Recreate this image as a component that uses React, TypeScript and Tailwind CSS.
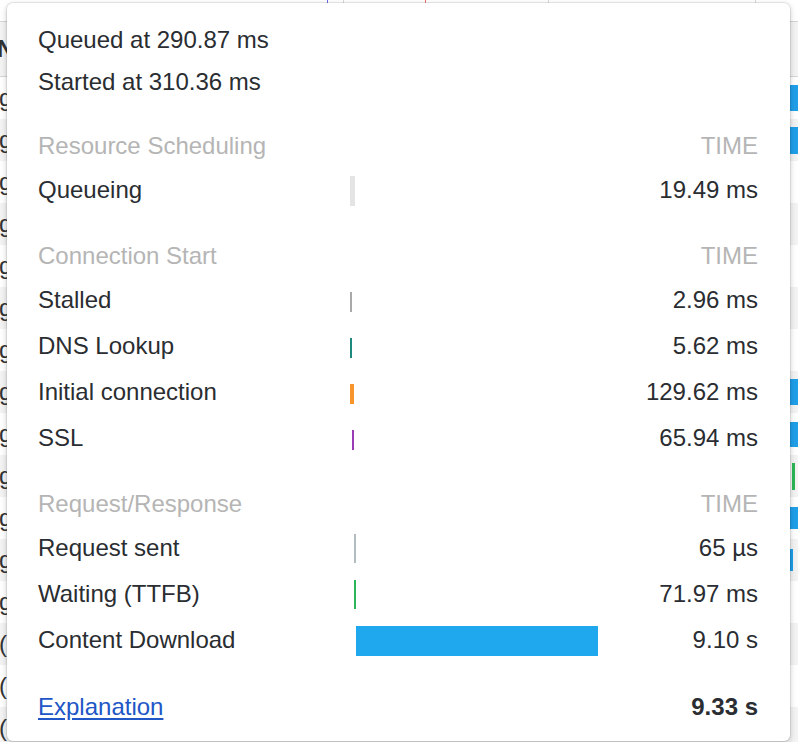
import React from "react"

const rows = Array.from({ length: 16 }, (_, i) => i)

// right-edge waterfall slivers peeking out past the popover
const sideBars: Record<number, string> = {
  0: "w-[8px] h-[26px] bg-[#1f9fe8]",
  1: "w-[8px] h-[27px] bg-[#1f9fe8]",
  7: "w-[8px] h-[26px] bg-[#1f9fe8]",
  8: "w-[8px] h-[25px] bg-[#1f9fe8]",
  9: "w-[3px] h-[27px] bg-[#2cb557] ml-[2px]",
  10: "w-[8px] h-[22px] bg-[#1f9fe8]",
  11: "w-[3px] h-[22px] bg-[#1f9fe8]",
}

type Row = { label: string; value: string; bar: string }

const sections: { title: string; rows: Row[] }[] = [
  {
    title: "Resource Scheduling",
    rows: [{ label: "Queueing", value: "19.49 ms", bar: "w-[5px] h-[30px] bg-[#e4e4e4] mt-[2px]" }],
  },
  {
    title: "Connection Start",
    rows: [
      { label: "Stalled", value: "2.96 ms", bar: "w-[2px] h-[20px] bg-[#a9a9a9] mt-[4px]" },
      { label: "DNS Lookup", value: "5.62 ms", bar: "w-[2px] h-[20px] bg-[#1e8a7e] mt-[4px]" },
      { label: "Initial connection", value: "129.62 ms", bar: "w-[4px] h-[20px] bg-[#f7952c] mt-[4px]" },
      { label: "SSL", value: "65.94 ms", bar: "ml-[2px] w-[2px] h-[20px] bg-[#9a3cb4] mt-[4px]" },
    ],
  },
  {
    title: "Request/Response",
    rows: [
      { label: "Request sent", value: "65 µs", bar: "ml-[4px] w-[2px] h-[29px] bg-[#b3bcc1]" },
      { label: "Waiting (TTFB)", value: "71.97 ms", bar: "ml-[4px] w-[2px] h-[29px] bg-[#2cb557]" },
      { label: "Content Download", value: "9.10 s", bar: "ml-[6px] w-[242px] h-[30px] bg-[#1fa8ee] mt-[1px]" },
    ],
  },
]

export default function App() {
  return (
    <div className="relative h-[742px] w-full overflow-hidden bg-white font-['Liberation_Sans',Arial,sans-serif] text-[24px] text-[#2a2d31]">
      {/* Network panel behind */}
      <div className="flex flex-col">
        <div className="relative h-[22px] border-b border-[#d6d6d6]">
          <div className="absolute left-[327px] top-0 h-full w-px bg-[#6b6bf0]" />
          <div className="absolute left-[343px] top-0 h-full w-px bg-[#dadada]" />
          <div className="absolute left-[425px] top-0 h-full w-px bg-[#f07070]" />
          <div className="absolute left-[548px] top-0 h-full w-px bg-[#dadada]" />
          <div className="absolute left-[755px] top-0 h-full w-px bg-[#dadada]" />
        </div>
        <div className="flex h-[55px] items-center border-b border-[#d6d6d6] bg-[#f3f3f3]">
          <span className="-ml-[3px] font-bold text-[#333]">N</span>
        </div>
        {rows.map((i) => (
          <div key={i} className={`flex h-[42px] items-center justify-between ${i % 2 ? "bg-[#f3f3f3]" : "bg-white"}`}>
            <span className={`-ml-[1px] text-[#333] ${i < 13 ? "underline" : ""}`}>{i < 13 ? "g" : "("}</span>
            <div className="flex w-[8px] items-center">
              {sideBars[i] && <div className={sideBars[i]} />}
            </div>
          </div>
        ))}
      </div>

      {/* Timing popover */}
      <div className="absolute left-[7px] top-[3px] h-[738px] w-[783px] rounded-[6px] bg-white pl-[31px] pr-[32px] pt-[16px] shadow-[0_0_0_1px_rgba(0,0,0,0.07),0_2px_6px_rgba(0,0,0,0.22)]">
        <div className="flex h-[42px] items-center">Queued at 290.87 ms</div>
        <div className="flex h-[42px] items-center">Started at 310.36 ms</div>

        {sections.map((s) => (
          <div key={s.title} className="mt-[22px]">
            <div className="grid h-[42px] grid-cols-[312px_250px_1fr] items-center text-[#b5b5b5]">
              <span>{s.title}</span>
              <span />
              <span className="text-right">TIME</span>
            </div>
            {s.rows.map((r) => (
              <div key={r.label} className="grid h-[46px] grid-cols-[312px_250px_1fr] items-center">
                <span>{r.label}</span>
                <div className="flex items-center">
                  <div className={r.bar} />
                </div>
                <span className="text-right">{r.value}</span>
              </div>
            ))}
          </div>
        ))}

        <div className="mt-[21px] flex h-[46px] items-center justify-between">
          <a href="#" className="text-[#2156c6] underline underline-offset-[3px]">Explanation</a>
          <span className="font-bold">9.33 s</span>
        </div>
      </div>
    </div>
  )
}
